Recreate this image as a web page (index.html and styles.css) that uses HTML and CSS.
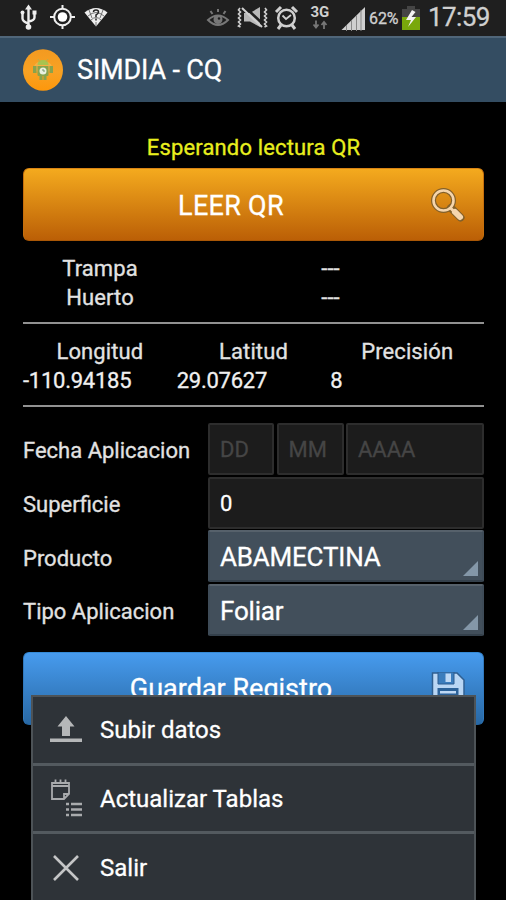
FILE: index.html
```html
<!DOCTYPE html>
<html lang="es">
<head>
<meta charset="utf-8">
<title>SIMDIA - CQ</title>
<link rel="stylesheet" href="styles.css">
</head>
<body>
<div class="screen">
  <header class="status">
    <svg class="status-left" width="120" height="36" viewBox="0 0 120 36" fill="none" stroke="#eee" stroke-width="2">
      <path d="M28.500 9v18M22.500 13.500v5q0 3 6 5M34.500 13.500v4q0 3-6 4" stroke-width="2.400"/>
      <path d="M28.500 4.500l3.500 5h-7z" fill="#eee" stroke="none"/>
      <circle cx="28.500" cy="27" r="2.800" fill="#eee" stroke="none"/>
      <circle cx="22.500" cy="12.500" r="2" fill="#eee" stroke="none"/>
      <path d="M32.500 10.500h4v4h-4z" fill="#eee" stroke="none"/>
      <circle cx="62.500" cy="17" r="8.300"/>
      <circle cx="62.500" cy="17" r="4.800" fill="#fff" stroke="none"/>
      <path d="M62.500 5v4M62.500 25v4M50 17h4M71 17h4"/>
      <path d="M84.500 12.500Q96 3.500 107.500 12.500L96 26.500z" fill="#eee" stroke="none"/>
      <path d="M88 16q8-7 16 0M91 20q5-5 10 0M89 10l3 8M103 10l-3 8M96 22v4" stroke="#555" stroke-width=".8"/>
      <path d="M93.500 12q0-2 2.500-2t2.500 2q0 1.500-2.500 3v2M96 18.500v2" stroke="#222" stroke-width="1.500"/>
    </svg>
    <svg class="status-right" width="162" height="36" viewBox="206 0 162 36" fill="none" stroke="#d0d0d0" stroke-width="2">
      <g stroke="#777">
        <path d="M208 20q10-9 20 0q-10 10-20 0z"/>
        <circle cx="218" cy="19.500" r="3.500" fill="#777"/>
        <path d="M218 9v3M210.500 11l2 3M225.500 11l-2 3"/>
      </g>
      <circle cx="219" cy="18.500" r="1.200" fill="#1f1f1f" stroke="none"/>
      <path d="M244 13h6l10-6v20l-10-5.500h-6z" fill="#b8b8b8" stroke="none"/>
      <path d="M245 7l19 18" stroke="#1f1f1f" stroke-width="2.500"/>
      <path d="M242 8l20 19" stroke-width="2"/>
      <path d="M240 8l-1.500 2 2 2-2 2 2 2-2 2 2 2-2 2 2 2-2 2 2 1M265 8l1.500 2-2 2 2 2-2 2 2 2-2 2 2 2-2 2 2 2-2 1" stroke-width="1.600"/>
      <circle cx="286.500" cy="18" r="8.300" stroke-width="2.500"/>
      <path d="M282.500 15.500l3.500 3.500 5-4" stroke-width="1.800"/>
      <path d="M276 12l5-5M292 7l5 5M281 25l-3 4M292 25l3 4" stroke-width="3"/>
      <path d="M316 20.500v7m-2.500-3l2.500 3 2.500-3M324 29v-7m-2.500 3l2.500-3 2.500 3" stroke="#777" stroke-width="1.800"/>
      <text class="network" x="310.500" y="16.500">3G</text>
      <path d="M341.500 30L365 7v23z" fill="#d0d0d0" stroke="none"/>
      <path d="M346.500 25v6M351.500 20v11M356.500 15v16M361 10v21" stroke="#888" stroke-width="1"/>
    </svg>
    <span class="percent">62%</span>
    <svg class="battery" width="18" height="36" viewBox="0 0 18 36">
      <path d="M5 6h8v3h5v9H0V9h5z" fill="#454545"/>
      <path d="M0 17h18v13H0z" fill="#79a80b"/>
      <path d="M10 10L4 20h5l-3 7 8-10H9.500l4-5z" fill="#f4f4f4"/>
    </svg>
    <span class="clock">17:59</span>
  </header>
  <div class="titlebar">
    <svg width="42" height="44" viewBox="0 0 42 44">
      <defs><linearGradient id="sun" x2="0" y2="1"><stop stop-color="#f39a20"/><stop offset=".55" stop-color="#f8a224"/><stop offset="1" stop-color="#fd970b"/></linearGradient></defs>
      <ellipse cx="21" cy="22" rx="20" ry="20.800" fill="url(#sun)"/>
      <ellipse cx="21" cy="19" rx="9" ry="6" fill="#f7bd61" opacity=".5"/>
      <path d="M15.500 17q0-5 5.500-5t5.500 5z" fill="#a9c34f"/>
      <path d="M16 11l2 3M26 11l-2 3" stroke="#b9b04a"/>
      <path d="M15.500 18h11v9q0 1-1 1h-1v4h-3v-4h-1v4h-3v-4h-1q-1 0-1-1zM11 18h3.500v7H11zM27.500 18H31v7h-3.500z" fill="#88a34c"/>
      <circle cx="21" cy="23" r="3.500" fill="#e9f0df"/><path d="M21 21v2h2" fill="none" stroke="#77966b"/>
    </svg>
    <h1 class="title">SIMDIA - CQ</h1>
  </div>
  <main class="content">
    <p class="waiting">Esperando lectura QR</p>
    <button class="action scan"><span class="action-text">LEER QR</span>
      <svg class="action-icon" width="36" height="36" viewBox="0 0 36 36" fill="none">
        <circle cx="14.500" cy="12.500" r="10" stroke="#82602a" stroke-width="5"/>
        <path d="M22 20l9.500 9.500" stroke="#82602a" stroke-width="8" stroke-linecap="round"/>
        <circle cx="14.500" cy="12.500" r="10" stroke="#f5d5ac" stroke-width="2.600"/>
        <path d="M21.500 20l3 3" stroke="#f5d5ac" stroke-width="3"/>
        <path d="M26 24l5 5" stroke="#f5d5ac" stroke-width="6" stroke-linecap="round"/>
      </svg>
    </button>
    <dl class="trap">
      <dt>Trampa</dt><dd>---</dd>
      <dt>Huerto</dt><dd>---</dd>
    </dl>
    <div class="location">
      <span class="head">Longitud</span><span class="head">Latitud</span><span class="head">Precisión</span>
      <span class="value">-110.94185</span><span class="value">29.07627</span><span class="value">8</span>
    </div>
    <form class="form">
      <label>Fecha Aplicacion</label>
      <div class="date"><span class="box hint">DD</span><span class="box hint">MM</span><span class="box hint">AAAA</span></div>
      <label>Superficie</label>
      <span class="box">0</span>
      <label class="low">Producto</label>
      <span class="box select">ABAMECTINA</span>
      <label>Tipo Aplicacion</label>
      <span class="box select">Foliar</span>
    </form>
    <button class="action save"><span class="save-text">Guardar Registro</span>
      <svg class="action-icon" width="34" height="34" viewBox="0 0 34 34">
        <path d="M1.500 1H26l7 7v25H1.500z" fill="#b9d6f4" stroke="#2f5f91" stroke-width="1.500"/>
        <path d="M7 0h16v12H7z" fill="#3b7dbd" stroke="#2c5d90"/>
        <path d="M14.500 1.500H20V10h-5.500z" fill="#bfd9f5"/>
        <path d="M6.500 16h21v17h-21z" fill="#2c6299"/>
        <path d="M9 19h16v2.500H9z" fill="#bfd9f5"/>
      </svg>
    </button>
  </main>
  <nav class="menu">
    <div class="item">
      <svg width="34" height="36" viewBox="0 0 34 36" fill="#b5b7b8"><path d="M17 4l8.500 10.500H21V24h-8v-9.500H8.500zM1 26.500h32V30H1z"/></svg>
      <span>Subir datos</span>
    </div>
    <div class="item second">
      <svg width="34" height="42" viewBox="0 0 34 42" fill="none" stroke="#a9abad" stroke-width="1.800">
        <path d="M3 5h17v11l-5 5H3zM3 8h17M15 21v-5h5M6.500 1.500V6M11.500 1.500V6M16.500 1.500V6"/>
        <path d="M17 26h3M22 26h11M17 31.500h3M22 31.500h11M17 37h3M22 37h11" stroke-width="2.400"/>
      </svg>
      <span>Actualizar Tablas</span>
    </div>
    <div class="item">
      <svg width="34" height="34" viewBox="0 0 34 34" stroke="#c4c5c6" stroke-width="2.600"><path d="M5 5l24 24M29 5L5 29"/></svg>
      <span>Salir</span>
    </div>
  </nav>
</div>
</body>
</html>
```
FILE: styles.css
```css
* { box-sizing: border-box; }
body { margin: 0; background: #000; color: #e2e2e2; font-family: Roboto, "Liberation Sans", sans-serif; -webkit-text-stroke: .3px; }
.screen { position: relative; width: 506px; height: 900px; overflow: hidden; }
.status { display: flex; height: 36px; background: #1f1f1f; color: #d0d0d0; }
.status svg { flex: none; }
.status-right { margin-left: 86px; }
.network { font: 700 15px Roboto, sans-serif; fill: #d0d0d0; stroke: none; }
.percent { width: 34px; padding-left: 1px; font-size: 16px; line-height: 37px; letter-spacing: -.1px; }
.clock { padding-left: 8px; font-size: 26px; line-height: 35px; letter-spacing: -.6px; }
.titlebar { display: flex; align-items: center; height: 66px; padding-left: 22px; background: #344d62; border-top: 2px solid #506679; }
.title { margin: 0 0 0 13px; color: #fff; font-size: 27px; font-weight: 400; line-height: 66px; letter-spacing: -.15px; }
.content { padding: 30px 22px 0 23px; }
.waiting { height: 36px; margin: 0; color: #e8ee1e; font-size: 22px; line-height: 32px; letter-spacing: .15px; text-align: center; }
.action { position: relative; display: flex; align-items: center; justify-content: center; width: 461px; height: 73px; padding: 0; border: 1px solid; border-radius: 6px; color: #fff; font-family: inherit; font-size: 27px; }
.scan { border-color: #da8413 #c66f0c #a95706; background: linear-gradient(#f4aa1e, #bb5f06); }
.action-icon { position: absolute; right: 18px; top: 19px; }
.action-text { margin: 2px 45px 0 0; letter-spacing: .3px; }
.save-text { margin: 2px 45px 0 0; }
.save { margin-top: 16px; border-color: #348ad7 #3179bd #23639d; background: linear-gradient(#479bee, #2868a4); }
.trap { display: grid; grid-template-columns: 154px 1fr; grid-auto-rows: 29.500px; height: 83px; margin: 0; padding-top: 12.500px; border-bottom: 2px solid #919191; font-size: 22px; line-height: 30px; letter-spacing: .1px; text-align: center; }
.trap dd { margin: 0; }
.location { display: grid; grid-template-columns: repeat(3, 1fr); grid-auto-rows: 29.500px; height: 83px; padding-top: 12.500px; border-bottom: 2px solid #919191; font-size: 22px; line-height: 30px; }
.head { text-align: center; letter-spacing: .1px; }
.value { letter-spacing: -.25px; color: #f0f0f0; }
.form { display: grid; grid-template-columns: 185px 276px; grid-auto-rows: 52px; row-gap: 1.600px; margin-top: 16px; font-size: 22px; line-height: 55px; }
.low { line-height: 57px; }
.date { display: grid; grid-template-columns: 66px 67px 138px; column-gap: 2.500px; }
.box { display: block; position: relative; height: 52px; padding-left: 10px; border: 2px solid #2d2d2d; border-radius: 2px; background: #1c1c1c; color: #fff; line-height: 50px; }
.hint { color: #454545; }
.select { border-color: #56616b #3e4b57 #34404b; background: #424f5b; font-size: 26px; letter-spacing: -.2px; }
.select::after { content: ""; position: absolute; right: 4px; bottom: 4px; border-left: 15px solid transparent; border-bottom: 15px solid #8497a8; }
.menu { position: absolute; left: 31px; top: 695px; width: 445px; height: 210px; border: 2px solid #4d5357; background: #2e3338; color: #fff; font-size: 24px; }
.item { display: flex; align-items: center; height: 68.500px; padding-left: 16px; gap: 17px; border-bottom: 3px solid #535a5f; }
.second { padding-top: 2px; }
.item:last-child { height: 67px; border-bottom: 0; }
```
